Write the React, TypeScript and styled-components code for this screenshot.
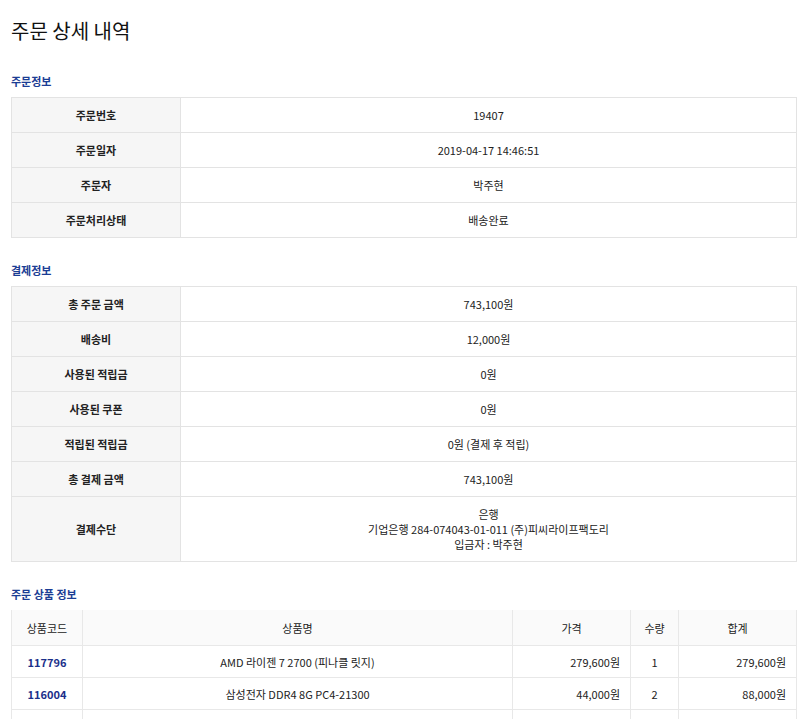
import React from "react";
import styled, { createGlobalStyle } from "styled-components";

const Global = createGlobalStyle`
  body { margin: 0; background: #fff; font-family: "Noto Sans CJK KR", "Noto Sans", sans-serif; color: #222; }
`;
const Page = styled.div` padding: 14px 3px 0 11px; `;
const Title = styled.h1` margin: 0 0 25px; font-size: 20px; font-weight: 400; line-height: 34px; color: #111; `;
const Section = styled.h2` margin: 0 0 8px; font-size: 11px; font-weight: 700; color: #1b3d94; line-height: 16px; `;
const Table = styled.table`
  width: 786px; border-collapse: collapse; margin-bottom: 24px; font-size: 11px; table-layout: fixed;
  border: 1px solid #e3e3e3;
`;
const Th = styled.th`
  width: 168px; background: #f6f6f6; font-weight: 700; height: 34px; border: 1px solid #e3e3e3; text-align: center; padding: 0;
`;
const Td = styled.td`
  height: 34px; border: 1px solid #e3e3e3; text-align: center; padding: 0; line-height: 15px;
`;
const HeadCell = styled.th<{ w?: number }>`
  ${p => (p.w ? `width:${p.w}px;` : "")} background: #fafafa; font-weight: 400; height: 35px; border: 1px solid #e8e8e8; border-top: none; padding: 0;
`;
const Cell = styled.td<{ align?: string; link?: boolean }>`
  height: 31px; border: 1px solid #e8e8e8; padding: 0 10px; text-align: ${p => p.align || "center"};
  ${p => (p.link ? "color:#1b2f8a; font-weight:700;" : "")}
`;

const info = [["주문번호", "19407"], ["주문일자", "2019-04-17 14:46:51"], ["주문자", "박주현"], ["주문처리상태", "배송완료"]];
const pay = [["총 주문 금액", "743,100원"], ["배송비", "12,000원"], ["사용된 적립금", "0원"], ["사용된 쿠폰", "0원"], ["적립된 적립금", "0원 (결제 후 적립)"], ["총 결제 금액", "743,100원"]];

export default function App() {
  return (
    <Page>
      <Global />
      <Title>주문 상세 내역</Title>
      <Section>주문정보</Section>
      <Table><tbody>{info.map(([a, b]) => <tr key={a}><Th>{a}</Th><Td>{b}</Td></tr>)}</tbody></Table>
      <Section>결제정보</Section>
      <Table><tbody>
        {pay.map(([a, b]) => <tr key={a}><Th>{a}</Th><Td>{b}</Td></tr>)}
        <tr><Th style={{ height: 64 }}>결제수단</Th><Td>은행<br />기업은행 284-074043-01-011 (주)피씨라이프팩도리<br />입금자 : 박주현</Td></tr>
      </tbody></Table>
      <Section>주문 상품 정보</Section>
      <Table style={{ border: "none", marginBottom: 0 }}>
        <thead><tr>
          <HeadCell w={70}>상품코드</HeadCell><HeadCell>상품명</HeadCell><HeadCell w={117}>가격</HeadCell><HeadCell w={47}>수량</HeadCell><HeadCell w={117}>합계</HeadCell>
        </tr></thead>
        <tbody>
          <tr><Cell link>117796</Cell><Cell>AMD 라이젠 7 2700 (피나클 릿지)</Cell><Cell align="right">279,600원</Cell><Cell>1</Cell><Cell align="right">279,600원</Cell></tr>
          <tr><Cell link>116004</Cell><Cell>삼성전자 DDR4 8G PC4-21300</Cell><Cell align="right">44,000원</Cell><Cell>2</Cell><Cell align="right">88,000원</Cell></tr>
          <tr><Cell link></Cell><Cell></Cell><Cell></Cell><Cell></Cell><Cell></Cell></tr>
        </tbody>
      </Table>
    </Page>
  );
}
